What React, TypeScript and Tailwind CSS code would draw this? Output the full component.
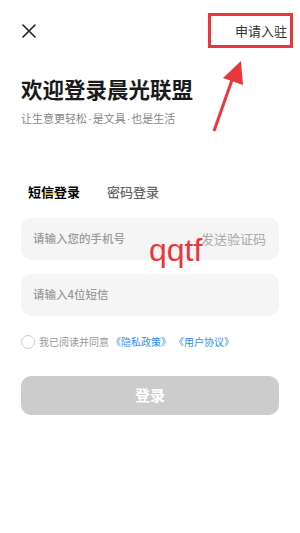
import React from 'react';

const cjk = { fontFamily: '"Noto Sans CJK SC", "Noto Sans", sans-serif' };

export default function App() {
  return (
    <div className="relative w-[300px] h-[533px] bg-white overflow-hidden" style={cjk}>
      {/* header */}
      <div className="flex items-center justify-between h-[62px] pl-[22px] pr-[13px]">
        <svg width="14" height="14" viewBox="0 0 14 14" fill="none">
          <path d="M1 1 L13 13 M13 1 L1 13" stroke="#1f1f1f" strokeWidth="1.6" strokeLinecap="round" />
        </svg>
        <span className="text-[13px] leading-[16px] text-[#333]">申请入驻</span>
      </div>

      <div className="px-[21px]">
        <h1 className="mt-[12px] text-[21.5px] leading-[30px] font-bold text-[#1a1a1a]">欢迎登录晨光联盟</h1>
        <p className="mt-[6px] text-[11px] leading-[16px] text-[#888]">
          让生意更轻松<span className="font-['Liberation_Sans'] px-[1px]">·</span>是文具<span className="font-['Liberation_Sans'] px-[1px]">·</span>也是生活
        </p>

        {/* tabs */}
        <div className="mt-[55px] ml-[7px] flex items-center gap-[27px] text-[13px] leading-[20px]">
          <span className="relative font-bold text-black">
            <span className="absolute left-[15px] top-[9px] w-[22px] h-[5px] rounded-full bg-linear-to-r from-[#ffcf00] to-[#fff6c8]" />
            <span className="relative">短信登录</span>
          </span>
          <span className="font-medium text-[#666]">密码登录</span>
        </div>

        {/* inputs */}
        <div className="mt-[16px] h-[42px] rounded-[10px] bg-[#f5f5f5] flex items-center justify-between pl-[12px] pr-[13px]">
          <span className="text-[11.5px] font-medium text-[#9a9a9a]">请输入您的手机号</span>
          <span className="text-[13px] text-[#aaa]">发送验证码</span>
        </div>
        <div className="mt-[14px] h-[42px] rounded-[10px] bg-[#f5f5f5] flex items-center pl-[12px]">
          <span className="text-[11.5px] font-medium text-[#9a9a9a]">请输入4位短信</span>
        </div>

        {/* agreement */}
        <div className="mt-[18px] h-[16px] flex items-center text-[10px] leading-[16px]">
          <span className="w-[14px] h-[14px] rounded-full border border-[#cfcfcf]" />
          <span className="ml-[4px] text-[#999]">我已阅读并同意</span>
          <span className="ml-[2px] text-[#2f8ff0]">《隐私政策》</span>
          <span className="ml-[3px] text-[#2f8ff0]">《用户协议》</span>
        </div>

        {/* login button */}
        <div className="mt-[26px] h-[39px] rounded-[10px] bg-[#cccccc] flex items-center justify-center">
          <span className="text-[15px] font-bold text-white">登录</span>
        </div>
      </div>

      {/* annotations */}
      <div className="absolute left-[208px] top-[13px] w-[85px] h-[35px] border-[3px] border-[#e8373d]" />
      <svg className="absolute left-0 top-0" width="300" height="140" viewBox="0 0 300 140">
        <line x1="214" y1="131" x2="232" y2="80" stroke="#e8373d" strokeWidth="3" />
        <polygon points="241,61 223,78 243,85" fill="#e8373d" />
      </svg>
      <span
        className="absolute left-[149px] top-[232px] text-[32px] leading-[36px] text-[#e8373d]"
        style={{ fontFamily: '"Liberation Sans", Arial, sans-serif' }}
      >
        qqtf
      </span>
    </div>
  );
}
